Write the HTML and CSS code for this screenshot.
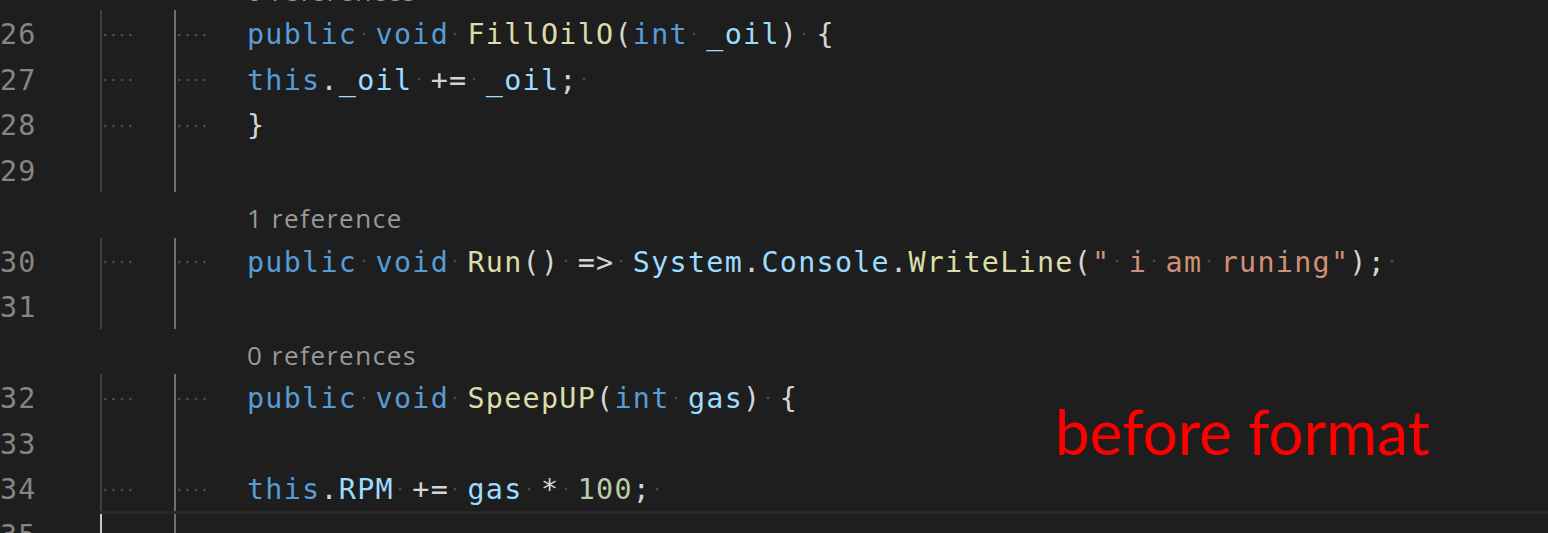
FILE: index.html
```html
<!DOCTYPE html>
<html lang="en">
<head>
<meta charset="utf-8">
<title>Editor</title>
<link rel="stylesheet" href="styles.css">
</head>
<body>
<div class="editor">
  <div class="row lens"><span class="lens-text">0 references</span></div>

  <div class="row">
    <span class="ln">26</span>
    <span class="ind"><i class="dots"></i></span><span class="ind active"><i class="dots"></i></span>
    <span class="code"><span class="k">public</span><span class="s"> </span><span class="k">void</span><span class="s"> </span><span class="f">FillOilO</span><span class="p">(</span><span class="k">int</span><span class="s"> </span><span class="v">_oil</span><span class="p">)</span><span class="s"> </span><span class="p">{</span></span>
  </div>
  <div class="row">
    <span class="ln">27</span>
    <span class="ind"><i class="dots"></i></span><span class="ind active"><i class="dots"></i></span>
    <span class="code"><span class="k">this</span><span class="p">.</span><span class="v">_oil</span><span class="s"> </span><span class="p">+=</span><span class="s"> </span><span class="v">_oil</span><span class="p">;</span><span class="s"> </span></span>
  </div>
  <div class="row">
    <span class="ln">28</span>
    <span class="ind"><i class="dots"></i></span><span class="ind active"><i class="dots"></i></span>
    <span class="code"><span class="p">}</span></span>
  </div>
  <div class="row">
    <span class="ln">29</span>
    <span class="ind"></span><span class="ind active"></span>
  </div>

  <div class="row lens"><span class="lens-text">1 reference</span></div>

  <div class="row">
    <span class="ln">30</span>
    <span class="ind"><i class="dots"></i></span><span class="ind active"><i class="dots"></i></span>
    <span class="code"><span class="k">public</span><span class="s"> </span><span class="k">void</span><span class="s"> </span><span class="f">Run</span><span class="p">()</span><span class="s"> </span><span class="p">=&gt;</span><span class="s"> </span><span class="v">System</span><span class="p">.</span><span class="v">Console</span><span class="p">.</span><span class="f">WriteLine</span><span class="p">(</span><span class="str">"</span><span class="s str"> </span><span class="str">i</span><span class="s str"> </span><span class="str">am</span><span class="s str"> </span><span class="str">runing"</span><span class="p">);</span><span class="s"> </span></span>
  </div>
  <div class="row">
    <span class="ln">31</span>
    <span class="ind"></span><span class="ind active"></span>
  </div>

  <div class="row lens"><span class="lens-text">0 references</span></div>

  <div class="row">
    <span class="ln">32</span>
    <span class="ind"><i class="dots"></i></span><span class="ind active"><i class="dots"></i></span>
    <span class="code"><span class="k">public</span><span class="s"> </span><span class="k">void</span><span class="s"> </span><span class="f">SpeepUP</span><span class="p">(</span><span class="k">int</span><span class="s"> </span><span class="v">gas</span><span class="p">)</span><span class="s"> </span><span class="p">{</span></span>
  </div>
  <div class="row">
    <span class="ln">33</span>
    <span class="ind"></span><span class="ind active"></span>
  </div>
  <div class="row">
    <span class="ln">34</span>
    <span class="ind"><i class="dots"></i></span><span class="ind active"><i class="dots"></i></span>
    <span class="code"><span class="k">this</span><span class="p">.</span><span class="v">RPM</span><span class="s"> </span><span class="p">+=</span><span class="s"> </span><span class="v">gas</span><span class="s"> </span><span class="p">*</span><span class="s"> </span><span class="n">100</span><span class="p">;</span><span class="s"> </span></span>
  </div>
  <div class="row current">
    <span class="ln">35</span>
    <div class="cur-line">
      <span class="ind cursor"></span><span class="ind active"></span>
    </div>
  </div>
</div>

<div class="note">before format</div>
</body>
</html>
```

FILE: styles.css
```css
html, body {
  margin: 0;
  padding: 0;
  background: #1e1e1e;
  overflow: hidden;
}

body {
  width: 1548px;
  height: 533px;
  position: relative;
}

.editor {
  margin-top: -35.5px;
  font-family: "DejaVu Sans Mono", monospace;
  font-size: 28.4px;
  letter-spacing: 1.277px;
}

.row {
  display: flex;
  height: 45.5px;
  align-items: stretch;
}

.ln {
  flex: none;
  width: 100px;
  box-sizing: border-box;
  padding-top: 5.4px;
  line-height: 40.1px;
  color: #858585;
  white-space: pre;
}

.ind {
  flex: none;
  width: 73.5px;
  box-sizing: border-box;
  border-left: 2px solid #404040;
}

.ind.active {
  border-left-color: #707070;
}

.dots {
  display: block;
  width: 32px;
  height: 4px;
  margin: 22.5px 0 0 -0.7px;
  background: radial-gradient(circle, #474747 0 1.2px, transparent 1.7px) 0 0 / 8.4px 4px repeat-x;
}

.code {
  flex: none;
  padding-top: 5.4px;
  line-height: 40.1px;
  white-space: pre;
  color: #d4d4d4;
}

.s {
  background: radial-gradient(circle, #4a4a4a 0 1.2px, transparent 1.7px) 4.3px 13.6px / 4px 4px no-repeat;
}

.k { color: #569cd6; }
.f { color: #dcdcaa; }
.v { color: #9cdcfe; }
.p { color: #d4d4d4; }
.str { color: #ce9178; }
.n { color: #b5cea8; }

.lens .lens-text {
  padding-left: 247px;
  padding-top: 8.3px;
  line-height: 37.2px;
  font-family: "Open Sans", "Noto Sans", sans-serif;
  font-size: 26px;
  letter-spacing: 1.6px;
  color: #999999;
  white-space: pre;
}

.cur-line {
  flex: 1;
  display: flex;
  border-top: 3px solid #282828;
}

.ind.cursor {
  border-left-color: #c8c8c8;
}

.note {
  position: absolute;
  left: 1055px;
  top: 400px;
  font-family: Lato, "Open Sans", sans-serif;
  font-size: 62px;
  line-height: 62px;
  color: #ff0000;
  white-space: pre;
}
```
